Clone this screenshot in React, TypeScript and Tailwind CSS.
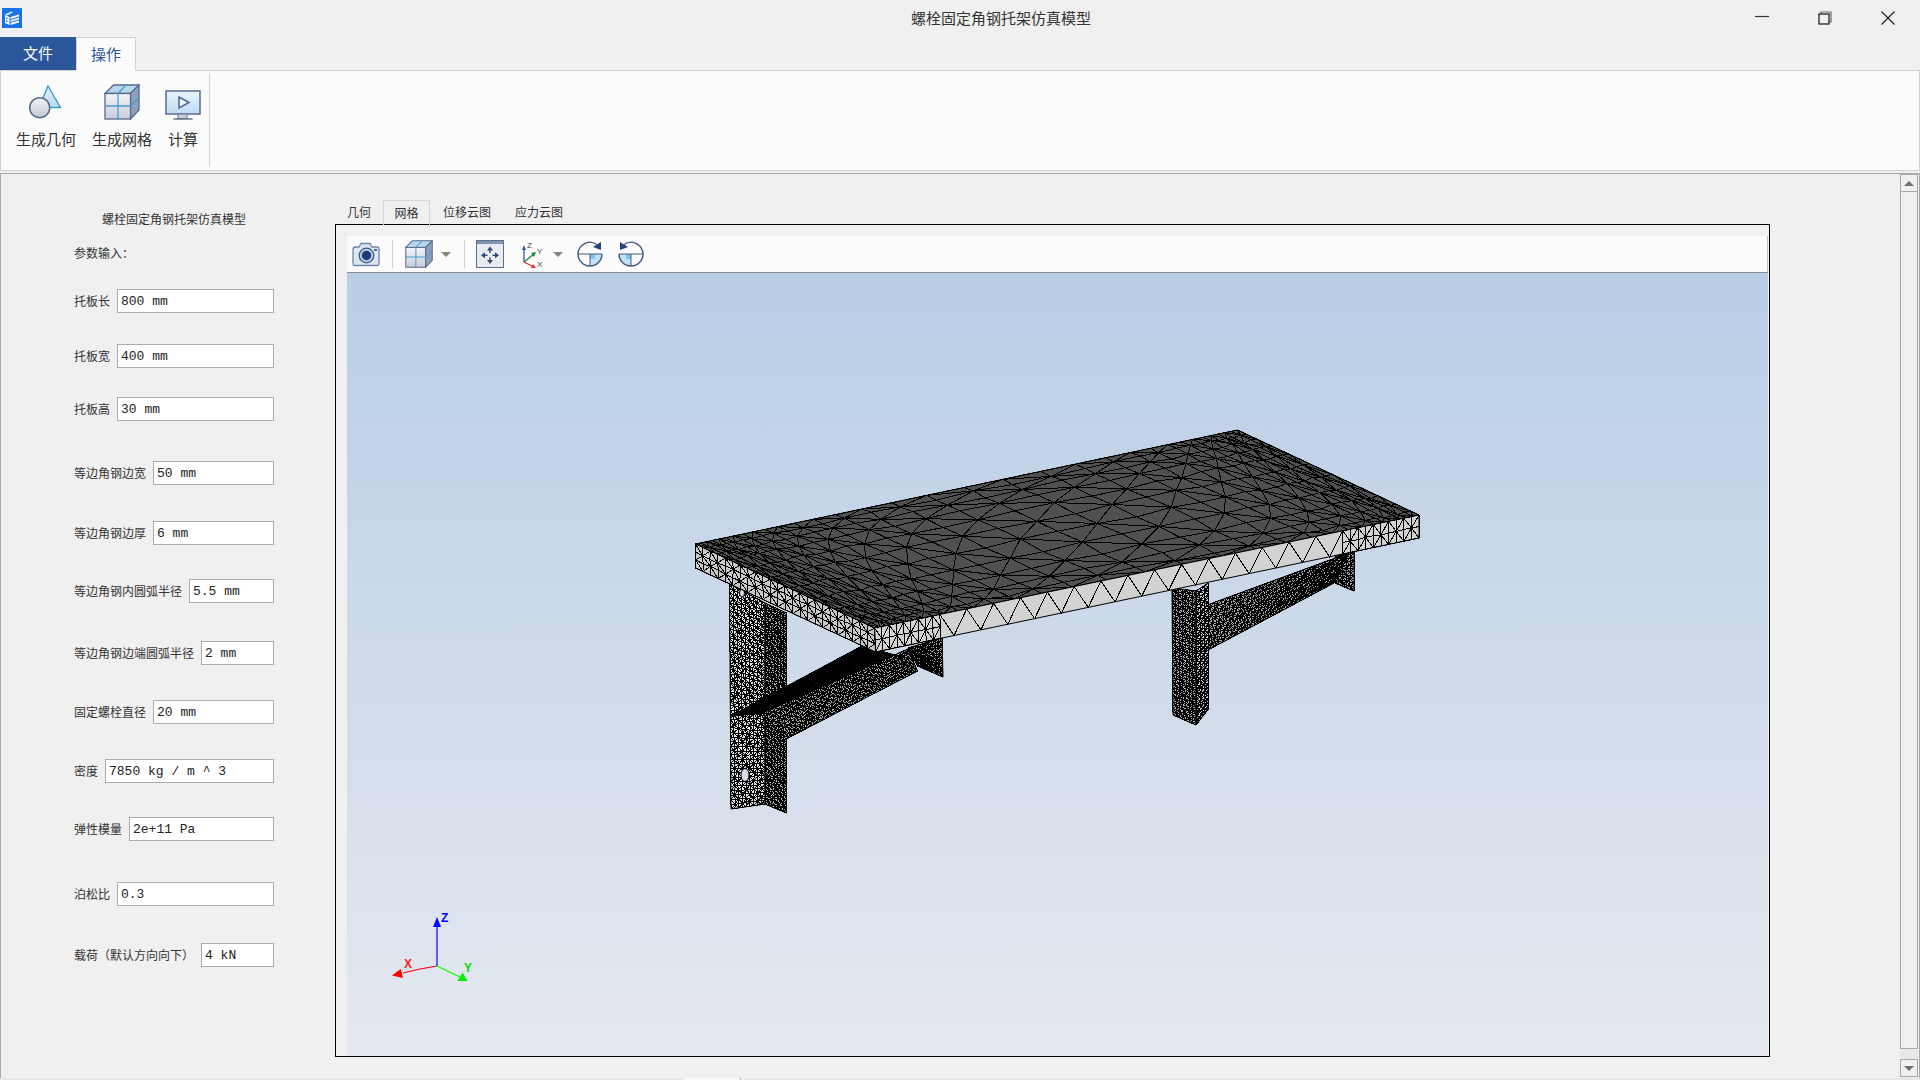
import React, { useMemo } from "react";

const CJK = "font-['Noto_Sans_CJK_SC','Microsoft_YaHei',sans-serif]";

type Pt = [number, number];

function rng(seed: number) {
  let s = seed;
  return () => {
    s = (s * 1664525 + 1013904223) % 4294967296;
    return s / 4294967296;
  };
}

const lerp = (a: Pt, b: Pt, t: number): Pt => [a[0] + (b[0] - a[0]) * t, a[1] + (b[1] - a[1]) * t];

// a = u0v0, b = u1v0, c = u1v1, d = u0v1
function bilinear(q: Pt[], u: number, v: number): Pt {
  return lerp(lerp(q[0], q[1], u), lerp(q[3], q[2], u), v);
}

const fmt = (p: Pt) => `${p[0].toFixed(1)} ${p[1].toFixed(1)}`;

function meshPath(q: Pt[], us: number[], vs: number[], jitter: number, seed: number, flip = false) {
  const r = rng(seed);
  const grid: Pt[][] = us.map((u, i) =>
    vs.map((v, j) => {
      const p = bilinear(q, u, v);
      const edge = i === 0 || j === 0 || i === us.length - 1 || j === vs.length - 1;
      if (edge) return p;
      return [p[0] + (r() - 0.5) * jitter, p[1] + (r() - 0.5) * jitter] as Pt;
    })
  );
  let d = "";
  for (let i = 0; i < us.length; i++) {
    for (let j = 0; j < vs.length; j++) {
      if (i + 1 < us.length) d += `M${fmt(grid[i][j])}L${fmt(grid[i + 1][j])}`;
      if (j + 1 < vs.length) d += `M${fmt(grid[i][j])}L${fmt(grid[i][j + 1])}`;
      if (i + 1 < us.length && j + 1 < vs.length) {
        const alt = (i + j) % 2 === 0;
        if (alt !== flip) d += `M${fmt(grid[i][j])}L${fmt(grid[i + 1][j + 1])}`;
        else d += `M${fmt(grid[i + 1][j])}L${fmt(grid[i][j + 1])}`;
      }
    }
  }
  return d;
}

// big triangles along the front edge of the plate
function zigzag(q: Pt[], from: number, to: number, n: number) {
  let d = `M${fmt(bilinear(q, from, 0))}`;
  for (let i = 0; i < n; i++) {
    const a = from + ((to - from) * i) / n;
    const b = from + ((to - from) * (i + 1)) / n;
    d += `L${fmt(bilinear(q, (a + b) / 2, 1))}L${fmt(bilinear(q, b, 0))}`;
  }
  return d;
}

const even = (n: number) => Array.from({ length: n + 1 }, (_, i) => i / n);
const span = (a: number, b: number, n: number) => even(n).map((t) => a + (b - a) * t);

// cell size grows toward the middle of the plate
function graded(minStep: number, maxStep: number, power: number) {
  const out = [0];
  let u = 0;
  while (u < 1) {
    const s = minStep + (maxStep - minStep) * Math.pow(Math.sin(Math.PI * Math.min(u, 1)), power);
    u += s;
    out.push(Math.min(u, 1));
  }
  if (out[out.length - 1] - out[out.length - 2] < minStep * 0.5) out.splice(out.length - 2, 1);
  return out;
}

function Face({ pts, d, fill }: { pts: Pt[]; d: string; fill: string }) {
  const pp = pts.map((p) => p.join(",")).join(" ");
  return (
    <g>
      <polygon points={pp} fill={fill} />
      <path d={d} stroke="#000" strokeWidth={1} fill="none" shapeRendering="crispEdges" />
      <polygon points={pp} fill="none" stroke="#000" strokeWidth={1} />
    </g>
  );
}

function MeshModel() {
  const parts = useMemo(() => {
    const top: Pt[] = [[695.5, 543], [1237.5, 429], [1419, 514], [874.5, 627]];
    const front: Pt[] = [[874.5, 627], [1419, 514], [1419, 537], [875.5, 651]];
    const side: Pt[] = [[695.5, 543], [874.5, 627], [875.5, 651], [695.5, 567]];
    const lf: Pt[] = [[729.5, 583], [765, 602], [765, 803], [731, 808]];
    const rf: Pt[] = [[765, 602], [786.5, 612], [786.5, 812], [765, 803]];
    const bandA: Pt[] = [[731, 715], [862, 645], [895, 654], [762.5, 712]];
    const bandB: Pt[] = [[762.5, 712], [908, 648], [917.5, 670], [786, 738]];
    const back: Pt[] = [[908, 647], [942, 637], [943, 676], [917.5, 665]];
    const rl: Pt[] = [[1172, 587], [1196, 590], [1196, 724], [1173, 714]];
    const rr: Pt[] = [[1196, 590], [1208.5, 582], [1208.5, 708], [1196, 724]];
    const rb: Pt[] = [[1199, 607], [1349, 552], [1334, 582], [1206, 650]];
    const rb2: Pt[] = [[1335, 556], [1354, 548], [1354, 590], [1335, 582]];
    return {
      top,
      front,
      side,
      lf,
      rf,
      bandA,
      bandB,
      back,
      rl,
      rr,
      rb,
      rb2,
      topD: meshPath(top, graded(0.01, 0.072, 1.5), graded(0.05, 0.13, 1), 2.5, 3),
      frontD:
        zigzag(front, 0.12, 0.86, 15) +
        meshPath(front, span(0, 0.12, 9), [0, 0.5, 1], 1, 5) +
        meshPath(front, span(0.86, 1, 10), [0, 0.5, 1], 1, 6),
      sideD: meshPath(side, even(24), [0, 0.33, 0.66, 1], 1.2, 7),
      lfD: meshPath(lf, even(9), even(50), 1.4, 11),
      rfD: meshPath(rf, even(7), even(62), 1, 13),
      bandAD: meshPath(bandA, even(60), even(7), 0.5, 17),
      bandBD: meshPath(bandB, even(46), even(9), 1, 19),
      backD: meshPath(back, even(10), even(12), 0.8, 23),
      rlD: meshPath(rl, even(7), even(38), 0.8, 29),
      rrD: meshPath(rr, even(3), even(34), 0.6, 31),
      rbD: meshPath(rb, even(40), even(11), 1, 37),
      rb2D: meshPath(rb2, even(5), even(11), 0.6, 41),
    };
  }, []);

  return (
    <svg viewBox="347 272 1421 783" className="w-full h-full block">
      <Face pts={parts.rb2} d={parts.rb2D} fill="#aaa" />
      <Face pts={parts.rb} d={parts.rbD} fill="#aaa" />
      <Face pts={parts.rl} d={parts.rlD} fill="#b0b0b0" />
      <Face pts={parts.rr} d={parts.rrD} fill="#ccc" />
      <Face pts={parts.back} d={parts.backD} fill="#aaa" />
      <Face pts={parts.lf} d={parts.lfD} fill="#e2e2e2" />
      <Face pts={parts.rf} d={parts.rfD} fill="#b8b8b8" />
      <ellipse cx={745} cy={774} rx={4} ry={6.5} fill="#d6dfea" stroke="#000" />
      <ellipse cx={742} cy={592} rx={2.5} ry={4} fill="#d0dce9" stroke="#000" />
      <Face pts={parts.bandA} d={parts.bandAD} fill="#111" />
      <Face pts={parts.bandB} d={parts.bandBD} fill="#aaa" />
      <Face pts={parts.top} d={parts.topD} fill="#505050" />
      <Face pts={parts.front} d={parts.frontD} fill="#d2d2d2" />
      <Face pts={parts.side} d={parts.sideD} fill="#c8c8c8" />

      {/* axis triad */}
      <line x1={437} y1={965} x2={437} y2={925} stroke="#0000ff" strokeWidth={1.2} />
      <polygon points="437,916 433,926 441,926" fill="#0000ff" />
      <polyline points="437,965 420,968 403,972" fill="none" stroke="#ff0000" strokeWidth={1.2} />
      <polygon points="400.7,968 392,974.5 403,977" fill="#ff0000" />
      <line x1={437} y1={965} x2={460} y2={976} stroke="#00ff00" strokeWidth={1.2} />
      <polygon points="462.5,971.5 457.5,980 467.5,980" fill="#00ee00" />
      <text x={441} y={921} fill="#0000ff" fontSize={12} fontWeight={700} fontFamily="Liberation Sans, sans-serif">Z</text>
      <text x={404} y={967} fill="#ff2020" fontSize={12} fontWeight={700} fontFamily="Liberation Sans, sans-serif">X</text>
      <text x={464} y={971} fill="#00e000" fontSize={12} fontWeight={700} fontFamily="Liberation Sans, sans-serif">Y</text>
    </svg>
  );
}

function AppLogo() {
  return (
    <svg width="20" height="20" viewBox="0 0 20 20" className="block">
      <rect width="20" height="20" fill="#1a73e8" />
      <polygon points="3,6.5 9,3.5 11,4.5 5,7.5" fill="#dcebfb" />
      <polygon points="3,7 7.5,9 7.5,17 3,15" fill="#fff" />
      <rect x="4" y="9.5" width="1.5" height="1.5" fill="#1a73e8" />
      <rect x="4" y="12.5" width="1.5" height="1.5" fill="#1a73e8" />
      <polygon points="8.5,9 17,6.5 17,8.5 8.5,11" fill="#fff" />
      <polygon points="8.5,12 17,9.5 17,11.5 8.5,14" fill="#e8f2fd" />
      <polygon points="8.5,15 17,12.5 17,14.5 8.5,17" fill="#fff" />
    </svg>
  );
}

function GeomIcon() {
  return (
    <svg width="36" height="36" viewBox="0 0 36 36" className="block">
      <defs>
        <linearGradient id="gi1" x1="0" y1="0" x2="0" y2="1">
          <stop offset="0" stopColor="#e4f1fa" />
          <stop offset="1" stopColor="#b7dcf3" />
        </linearGradient>
        <linearGradient id="gi2" x1="0" y1="0" x2="0" y2="1">
          <stop offset="0" stopColor="#f2f3f6" />
          <stop offset="1" stopColor="#c5c9d4" />
        </linearGradient>
      </defs>
      <polygon points="20,2 32.5,23.5 11,23.5" fill="url(#gi1)" stroke="#3f97cf" strokeWidth="1.4" />
      <circle cx="11.7" cy="23.7" r="10" fill="url(#gi2)" stroke="#5c6b8c" strokeWidth="1.5" />
    </svg>
  );
}

function CubeIcon({ size = 36 }: { size?: number }) {
  return (
    <svg width={size} height={size} viewBox="0 0 36 36" className="block">
      <defs>
        <linearGradient id="cb1" x1="0" y1="0" x2="0" y2="1">
          <stop offset="0" stopColor="#f3f4f7" />
          <stop offset="1" stopColor="#c9cdd8" />
        </linearGradient>
      </defs>
      <polygon points="1,9.5 9.5,1 35,1 26.5,9.5" fill="#b9d7ec" stroke="#56698c" strokeWidth="1.3" />
      <polygon points="26.5,9.5 35,1 35,26 26.5,35" fill="#8fa0bb" stroke="#56698c" strokeWidth="1.3" />
      <rect x="1" y="9.5" width="25.5" height="25.5" fill="url(#cb1)" stroke="#56698c" strokeWidth="1.3" />
      <path d="M14 9.5V35M1 22h25.5M14 9.5L22 1M26.5 22L35 13.5" stroke="#4a9cd0" strokeWidth="1.3" fill="none" />
    </svg>
  );
}

function MonitorIcon() {
  return (
    <svg width="36" height="30" viewBox="0 0 36 30" className="block">
      <defs>
        <linearGradient id="mo1" x1="0" y1="0" x2="0" y2="1">
          <stop offset="0" stopColor="#eaf3fb" />
          <stop offset="1" stopColor="#bcdcf2" />
        </linearGradient>
      </defs>
      <rect x="1" y="1" width="34" height="23" fill="url(#mo1)" stroke="#5a6b8d" strokeWidth="1.5" />
      <polygon points="14,7 14,18 24,12.5" fill="#eef5fb" stroke="#4f6289" strokeWidth="1.5" />
      <rect x="13" y="24" width="9" height="4.5" fill="#c8ccd6" stroke="#6a7895" strokeWidth="1" />
      <path d="M8.5 29h19" stroke="#5a6b8d" strokeWidth="1.4" />
    </svg>
  );
}

function RibbonButton({ label, width, children }: { label: string; width: number; children: React.ReactNode }) {
  return (
    <div className="flex flex-col items-center" style={{ width }}>
      <div className="h-[44px] flex items-end">{children}</div>
      <div className="mt-[9px] text-[15px] leading-[20px] text-[#333]">{label}</div>
    </div>
  );
}

function CameraIcon() {
  return (
    <svg width="28" height="25" viewBox="0 0 28 25" className="block">
      <path d="M1 7.5Q1 5 3.5 5H7L9 1.5H18L20 5H25Q27 5 27 7.5V21Q27 23.5 25 23.5H3Q1 23.5 1 21Z" fill="#dbe6f2" stroke="#6f86a8" strokeWidth="1.3" />
      <circle cx="14.5" cy="13.5" r="7.3" fill="#b7cbe2" stroke="#44597f" strokeWidth="1.3" />
      <circle cx="14.5" cy="13.5" r="4.7" fill="#1f3a78" />
      <rect x="22" y="7" width="3" height="2" fill="#5a6b8d" />
    </svg>
  );
}

function FitIcon() {
  return (
    <svg width="28" height="28" viewBox="0 0 28 28" className="block">
      <rect x="0.5" y="0.5" width="27" height="27" fill="#e8ebf1" stroke="#5d6f90" />
      <rect x="1" y="1" width="26" height="3" fill="#8494ae" />
      <g fill="#2d4674" stroke="none">
        <polygon points="14,6.5 11,10.5 17,10.5" />
        <polygon points="14,24 11,20 17,20" />
        <polygon points="5,15.3 9,12.3 9,18.3" />
        <polygon points="23,15.3 19,12.3 19,18.3" />
        <rect x="13.3" y="10" width="1.4" height="3" />
        <rect x="13.3" y="17.5" width="1.4" height="3" />
        <rect x="8.5" y="14.6" width="3" height="1.4" />
        <rect x="16.5" y="14.6" width="3" height="1.4" />
      </g>
    </svg>
  );
}

function AxesIcon() {
  return (
    <svg width="22" height="29" viewBox="0 0 22 29" className="block">
      <line x1="2" y1="22" x2="2" y2="8" stroke="#2a5db0" strokeWidth="1.3" />
      <polygon points="2,5 0,10 4,10" fill="#2a5db0" />
      <line x1="2" y1="22" x2="12" y2="14" stroke="#1d8a3a" strokeWidth="1.3" />
      <polygon points="14,12 9,13 12,17" fill="#1d8a3a" />
      <line x1="2" y1="22" x2="12" y2="27" stroke="#e03030" strokeWidth="1.3" />
      <polygon points="14,28 9,28 11,24" fill="#e03030" />
      <text x="5" y="8" fontSize="8" fill="#444" fontFamily="Liberation Sans, sans-serif">Z</text>
      <text x="15" y="14" fontSize="8" fill="#444" fontFamily="Liberation Sans, sans-serif">Y</text>
      <text x="15" y="27" fontSize="8" fill="#444" fontFamily="Liberation Sans, sans-serif">X</text>
    </svg>
  );
}

function RotateIcon({ mirror }: { mirror?: boolean }) {
  return (
    <svg width="26" height="26" viewBox="0 0 26 26" className={mirror ? "block -scale-x-100" : "block"}>
      <path d="M13 13H25A12 12 0 0 1 13 25Z" fill="#bfe3f7" />
      <rect x="13" y="13" width="5" height="5" fill="#7cc4ec" />
      <path d="M1 13A12 12 0 0 1 20 3.5M25 13A12 12 0 0 1 1 13" fill="none" stroke="#45587f" strokeWidth="1.4" />
      <path d="M1 13H25M13 13V25" stroke="#45587f" strokeWidth="1" />
      <polygon points="24,1 24,9 16,6" fill="#27437a" />
    </svg>
  );
}

const Caret = () => <div className="w-0 h-0 border-x-[5px] border-x-transparent border-t-[5px] border-t-[#808080]" />;
const Sep = () => <div className="w-px h-[28px] bg-[#d0d0d0]" />;

const fields = [
  { label: "托板长", value: "800 mm", mt: "mt-[27px]" },
  { label: "托板宽", value: "400 mm", mt: "mt-[31px]" },
  { label: "托板高", value: "30 mm", mt: "mt-[29px]" },
  { label: "等边角钢边宽", value: "50 mm", mt: "mt-[40px]" },
  { label: "等边角钢边厚", value: "6 mm", mt: "mt-[36px]" },
  { label: "等边角钢内圆弧半径", value: "5.5 mm", mt: "mt-[34px]" },
  { label: "等边角钢边端圆弧半径", value: "2 mm", mt: "mt-[38px]" },
  { label: "固定螺栓直径", value: "20 mm", mt: "mt-[35px]" },
  { label: "密度", value: "7850 kg / m ^ 3", mt: "mt-[35px]" },
  { label: "弹性模量", value: "2e+11 Pa", mt: "mt-[34px]" },
  { label: "泊松比", value: "0.3", mt: "mt-[41px]" },
  { label: "载荷（默认方向向下）", value: "4 kN", mt: "mt-[37px]" },
];

export default function App() {
  return (
    <div className={`w-[1920px] h-[1080px] flex flex-col overflow-hidden bg-[#f0f0f0] ${CJK}`}>
      {/* title bar */}
      <div className="h-[37px] flex items-center shrink-0">
        <div className="ml-[2px] -mt-[1px]">
          <AppLogo />
        </div>
        <div className="ml-[889px] text-[15px] text-[#333] leading-[20px] -mt-[1px]">螺栓固定角钢托架仿真模型</div>
        <div className="ml-auto flex items-center mb-[2px]">
          <svg width="14" height="14" viewBox="0 0 14 14" className="mr-[49px] -mt-[4px]">
            <path d="M0 7.5H14" stroke="#333" strokeWidth="1.2" />
          </svg>
          <svg width="14" height="14" viewBox="0 0 14 14" className="mr-[49px]">
            <path d="M3 3V1H13V11H11" fill="none" stroke="#666" strokeWidth="1.2" />
            <rect x="1" y="3" width="10" height="10" fill="none" stroke="#222" strokeWidth="1.3" />
          </svg>
          <svg width="14" height="14" viewBox="0 0 14 14" className="mr-[25px]">
            <path d="M0.5 0.5L13.5 13.5M13.5 0.5L0.5 13.5" stroke="#222" strokeWidth="1.2" />
          </svg>
        </div>
      </div>

      {/* menu tabs */}
      <div className="h-[33px] flex shrink-0 relative z-10">
        <div className="w-[76px] h-full bg-[#2b579a] text-white text-[15px] flex items-center justify-center">文件</div>
        <div className="w-[60px] h-[34px] bg-[#fbfbfb] border border-b-0 border-[#d2d2d2] text-[#2b579a] text-[15px] flex items-center justify-center">
          操作
        </div>
      </div>

      {/* ribbon */}
      <div className="h-[101px] flex shrink-0 bg-[#fbfbfb] border border-[#d2d2d2]">
        <div className="flex pt-[3px] pl-[15px] h-[94px] mt-[2px] w-[209px] border-r border-[#d2d2d2]">
          <RibbonButton label="生成几何" width={60}>
            <GeomIcon />
          </RibbonButton>
          <div className="w-[16px]" />
          <RibbonButton label="生成网格" width={60}>
            <CubeIcon />
          </RibbonButton>
          <div className="w-[16px]" />
          <RibbonButton label="计算" width={30}>
            <MonitorIcon />
          </RibbonButton>
        </div>
      </div>

      {/* main area */}
      <div className="flex-1 flex mt-[2px] border-t border-l border-r border-[#a8a8a8] min-h-0">
        {/* parameter panel */}
        <div className="w-[334px] shrink-0 text-[12px] text-[#333] pl-[73px]">
          <div className="mt-[36px] ml-[28px] h-[18px] leading-[18px]">螺栓固定角钢托架仿真模型</div>
          <div className="mt-[16px] h-[18px] leading-[18px]">参数输入：</div>
          {fields.map((f) => (
            <div key={f.label} className={`flex items-center h-[24px] w-[200px] ${f.mt}`}>
              <span className="whitespace-nowrap mr-[7px]">{f.label}</span>
              <div className="flex-1 h-full bg-white border border-[#ababab] pl-[3px] font-['Liberation_Mono',monospace] text-[13px] text-[#222] leading-[23px] whitespace-nowrap">
                {f.value}
              </div>
            </div>
          ))}
        </div>

        {/* tabs and viewer */}
        <div className="w-[1435px] shrink-0 pt-[25px]">
          <div className="h-[25px] flex items-center text-[12px] text-[#333]">
            <div className="ml-[12px] w-[24px] whitespace-nowrap">几何</div>
            <div className="ml-[12px] w-[47px] h-[25px] -mb-px relative z-10 border border-b-0 border-[#d8d8d8] flex items-center justify-center">网格</div>
            <div className="ml-[13px] w-[48px] whitespace-nowrap">位移云图</div>
            <div className="ml-[24px] w-[48px] whitespace-nowrap">应力云图</div>
          </div>
          <div className="h-[833px] border border-black pl-[11px] pr-px pt-[11px] flex flex-col">
            <div className="h-[37px] shrink-0 bg-[#fcfcfc] border-b border-[#8c8c8c] border-r-[1px] border-r-[#c0c0c0] flex items-center">
              <div className="ml-[5px]">
                <CameraIcon />
              </div>
              <div className="ml-[12px]">
                <Sep />
              </div>
              <div className="ml-[12px]">
                <CubeIcon size={28} />
              </div>
              <div className="ml-[8px]">
                <Caret />
              </div>
              <div className="ml-[13px]">
                <Sep />
              </div>
              <div className="ml-[11px]">
                <FitIcon />
              </div>
              <div className="ml-[18px]">
                <AxesIcon />
              </div>
              <div className="ml-[9px]">
                <Caret />
              </div>
              <div className="ml-[14px]">
                <RotateIcon />
              </div>
              <div className="ml-[15px]">
                <RotateIcon mirror />
              </div>
            </div>
            <div className="flex-1 min-h-0 bg-gradient-to-b from-[#b9cde5] to-[#e5e9ef]">
              <MeshModel />
            </div>
          </div>
        </div>

        {/* scrollbar */}
        <div className="ml-auto mr-[1px] w-[18px] flex flex-col bg-[#e8e8e8] h-[903px]">
          <div className="h-[18px] border border-[#a8a8a8] bg-[#f0f0f0] flex items-center justify-center">
            <div className="w-0 h-0 border-x-[5px] border-x-transparent border-b-[5px] border-b-[#707070]" />
          </div>
          <div className="h-[857px] bg-[#f0f0f0] border-x border-b border-[#a8a8a8]" />
          <div className="flex-1" />
          <div className="h-[18px] border border-[#a8a8a8] bg-[#f0f0f0] flex items-center justify-center">
            <div className="w-0 h-0 border-x-[5px] border-x-transparent border-t-[5px] border-t-[#707070]" />
          </div>
        </div>
      </div>

      {/* bottom edge */}
      <div className="h-[2px] shrink-0 flex bg-[#e6e6e6]">
        <div className="ml-[684px] w-[56px] bg-[#f8f8f8]" />
        <div className="w-px bg-[#b8b8b8]" />
        <div className="w-[4px] bg-[#f0f0f0]" />
      </div>
    </div>
  );
}
